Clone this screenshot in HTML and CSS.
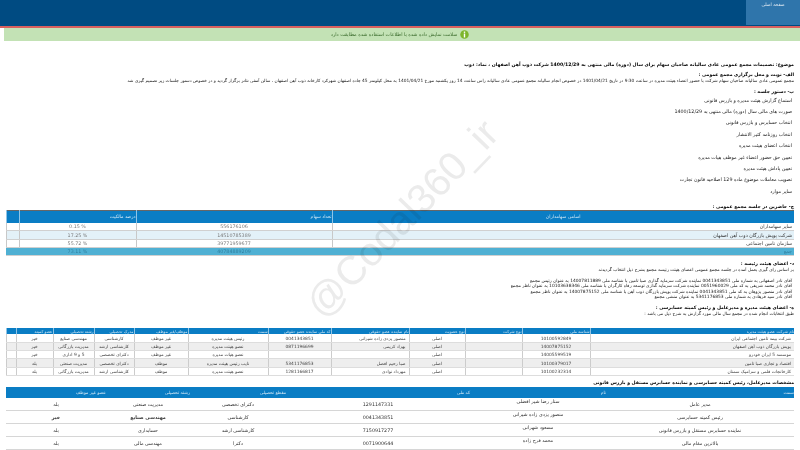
FILE: index.html
```html
<!doctype html>
<html lang="fa">
<head>
<meta charset="utf-8">
<title>تصمیمات مجمع</title>
<link rel="stylesheet" href="styles.css">
</head>
<body>
<div class="topbar"><div class="tab">صفحه اصلی</div></div>
<div class="notice">
	<svg class="info" width="9" height="9" viewBox="0 0 18 18"><circle cx="9" cy="9" r="8.5" fill="#7db52c"/><rect x="7.6" y="3" width="2.8" height="2.8" fill="#fff"/><rect x="7.6" y="7" width="2.8" height="8" fill="#fff"/></svg>
	<span>سلامت نمایش داده شده با اطلاعات استفاده شده مطابقت دارد</span>
</div>
<div class="mark">@Codal360_ir</div>
<div class="content">
	<p class="subject">موضوع: تصمیمات مجمع عمومی عادی سالیانه صاحبان سهام برای سال (دوره) مالی منتهی به 1400/12/29 شرکت ذوب آهن اصفهان ، نماد: ذوب</p>
	<p class="head first">الف- نوبت و محل برگزاری مجمع عمومی :</p>
	<p class="line long">مجمع عمومی عادی سالیانه صاحبان سهام شرکت با حضور اعضاء هیئت مدیره در ساعت 9:30 در تاریخ 1401/04/21 در خصوص انجام سالیانه مجمع عمومی عادی سالیانه راس ساعت 14 روز یکشنبه مورخ 1401/04/21 به محل کیلومتر 45 جاده اصفهان شهرکرد کارخانه ذوب آهن اصفهان ، سالن آمفی تئاتر برگزار گردید و در خصوص دستور جلسات زیر تصمیم گیری شد</p>
	<p class="head agenda">ب- دستور جلسه :</p>
	<ul class="agenda-list">
		<li>استماع گزارش هیئت مدیره و بازرس قانونی</li>
		<li>صورت های مالی سال (دوره) مالی منتهی به 1400/12/29</li>
		<li>انتخاب حسابرس و بازرس قانونی</li>
		<li>انتخاب روزنامه کثیر الانتشار</li>
		<li>انتخاب اعضای هیئت مدیره</li>
		<li>تعیین حق حضور اعضاء غیر موظف هیات مدیره</li>
		<li>تعیین پاداش هیئت مدیره</li>
		<li>تصویب معاملات موضوع ماده 129 اصلاحیه قانون تجارت</li>
		<li>سایر موارد</li>
	</ul>
	<p class="head before-table">ج- حاضرین در جلسه مجمع عمومی :</p>
	<table class="holders">
		<colgroup><col class="c-name"><col class="c-count"><col class="c-pct"><col class="c-gap"></colgroup>
		<tr><th class="name-head">اسامی سهامداران</th><th>تعداد سهام</th><th>درصد مالکیت</th><th></th></tr>
		<tr><td class="start">سایر سهامداران</td><td>556176106</td><td>% 0.15</td><td></td></tr>
		<tr class="alt"><td class="start">شرکت پویش بازرگان ذوب آهن اصفهان</td><td>14510785389</td><td>% 17.25</td><td></td></tr>
		<tr><td class="start">سازمان تامین اجتماعی</td><td>39771959677</td><td>% 55.72</td><td></td></tr>
		<tr class="total"><td class="start">جمع</td><td>40784889209</td><td>% 73.11</td><td></td></tr>
	</table>
	<p class="head after-table">د- اعضای هیئت رئیسه :</p>
	<p class="line">بر اساس رای گیری بعمل آمده در جلسه مجمع عمومی اعضای هیئت رئیسه مجمع بشرح ذیل انتخاب گردیدند</p>
	<div class="board">
		<p>آقای نادر اصفهانی به شماره ملی 0041343851 نماینده شرکت سرمایه گذاری صبا تامین با شناسه ملی 14007811889 به عنوان رئیس مجمع</p>
		<p>آقای نادر محمد شریفی به کد ملی 0051960029 نماینده شرکت سرمایه گذاری توسعه رفاه کارگران با شناسه ملی 10103638346 به عنوان ناظر مجمع</p>
		<p>آقای نادر منصور پژوهان به کد ملی 0041343851 نماینده شرکت پویش بازرگان ذوب آهن با شناسه ملی 14007875152 به عنوان ناظر مجمع</p>
		<p>آقای نادر سید فرهادی به شماره ملی 5341176853 به عنوان منشی مجمع</p>
	</div>
	<p class="head directors">ه- اعضای هیئت مدیره و مدیرعامل و رئیس کمیته حسابرسی :</p>
	<p class="line">طبق انتخابات انجام شده در مجمع سال مالی مورد گزارش به شرح ذیل می باشد :</p>
	<table class="members">
		<colgroup><col class="m1"><col class="m2"><col class="m3"><col class="m4"><col class="m5"><col class="m6"><col class="m7"><col class="m8"><col class="m9"><col class="m10"><col class="m11"><col class="m12"></colgroup>
		<tr><th>نام شرکت عضو هیئت مدیره</th><th>شناسه ملی</th><th>نوع شرکت</th><th>نوع عضویت</th><th>نام نماینده عضو حقوقی</th><th>کد ملی نماینده عضو حقوقی</th><th>سمت</th><th>موظف/غیر موظف</th><th>مدرک تحصیلی</th><th>رشته تحصیلی</th><th>عضو کمیته</th><th></th></tr>
		<tr><td class="start">شرکت بیمه تامین اجتماعی ایران</td><td>10100592849</td><td class="none"></td><td>اصلی</td><td class="start">منصور یزدی زاده شیرانی</td><td>0041343851</td><td>رئیس هیئت مدیره</td><td>غیر موظف</td><td>کارشناسی</td><td>مهندسی صنایع</td><td>خیر</td><td></td></tr>
		<tr class="alt"><td class="start">پویش بازرگان ذوب آهن اصفهان</td><td>14007875152</td><td class="none"></td><td>اصلی</td><td class="start">بهزاد کریمی</td><td>0871196699</td><td>عضو هیئت مدیره</td><td>غیر موظف</td><td>کارشناسی ارشد</td><td>مدیریت بازرگانی</td><td>خیر</td><td></td></tr>
		<tr><td class="start">موسسه 5 ایران خودرو</td><td>14005599519</td><td class="none"></td><td>اصلی</td><td class="start"></td><td></td><td>عضو هیات مدیره</td><td>غیر موظف</td><td>دکترای تخصصی</td><td>5 و 9 اداری</td><td>خیر</td><td></td></tr>
		<tr class="alt"><td class="start">اقتصاد و تجاری صبا تامین</td><td>10100379017</td><td class="none"></td><td>اصلی</td><td class="start">صبا رحیم افضل</td><td>5341176853</td><td>نایب رئیس هیئت مدیره</td><td>موظف</td><td>دکترای تخصصی</td><td>مدیریت صنعتی</td><td>بله</td><td></td></tr>
		<tr><td class="start">کارخانجات قلمی و سرامیک سمنان</td><td>10100232314</td><td class="none"></td><td>اصلی</td><td class="start">مهرداد نوادی</td><td>1281166817</td><td>عضو هیئت مدیره</td><td>موظف</td><td>کارشناسی ارشد</td><td>مدیریت بازرگانی</td><td>بله</td><td></td></tr>
	</table>
	<p class="head before-staff">مشخصات مدیرعامل، رئیس کمیته حسابرسی و نماینده حسابرس مستقل و بازرس قانونی</p>
	<table class="staff">
		<colgroup><col class="s1"><col class="s2"><col class="s3"><col class="s4"><col class="s5"><col class="s6"></colgroup>
		<tr><th>سمت</th><th>نام</th><th>کد ملی</th><th>مقطع تحصیلی</th><th>رشته تحصیلی</th><th>عضو غیر موظف</th></tr>
		<tr><td>مدیر عامل</td><td class="high">ستار رضا شیر افضلی</td><td>1291147331</td><td>دکترای تخصصی</td><td>مدیریت صنعتی</td><td>بله</td></tr>
		<tr><td>رئیس کمیته حسابرسی</td><td class="high">منصور یزدی زاده شیرانی</td><td>0041343851</td><td>کارشناسی</td><td class="bold">مهندسی صنایع</td><td class="bold">خیر</td></tr>
		<tr><td>نماینده حسابرس مستقل و بازرس قانونی</td><td class="high">مسعود شهرانی</td><td>7150917277</td><td>کارشناسی ارشد</td><td>حسابداری</td><td>بله</td></tr>
		<tr><td>بالاترین مقام مالی</td><td class="high">محمد فرح زاده</td><td>0071900644</td><td>دکترا</td><td>مهندسی مالی</td><td>بله</td></tr>
	</table>
</div>
</body>
</html>
```

FILE: styles.css
```css
*{margin: 0;padding: 0;box-sizing: border-box;}
html,body{
	height: 450px;
	overflow: hidden;
}
body{
	font-family: "DejaVu Sans", "Liberation Sans", sans-serif;
	font-size: 5px;
	color: #222;
	background: #fff;
	position: relative;
}
.topbar{
	height: 28px;
	background: #004b82;
	border-bottom: 2px solid #d9605f;
	display: flex;
	justify-content: flex-end;
}
.tab{
	width: 54px;
	height: 25px;
	background: #2f75ab;
	color: #dfe9f2;
	font-size: 4.5px;
	text-align: center;
	padding-top: 2px;
}
.notice{
	margin-left: 4px;
	height: 12.5px;
	background: #c3e2b5;
	color: #3a6b2c;
	display: flex;
	align-items: center;
	justify-content: center;
	gap: 3px;
	font-size: 4.8px;
	padding-right: 4px;
	direction: rtl;
}
.info{
	flex: none;
}
.mark{
	position: absolute;
	left: 272px;
	top: 196px;
	width: 260px;
	text-align: center;
	font-family: "Liberation Sans", sans-serif;
	font-size: 40px;
	color: #ebebeb;
	white-space: nowrap;
	transform: rotate(-46deg);
	z-index: 2;
	mix-blend-mode: multiply;
}
.content{
	direction: rtl;
	padding: 0 6px;
	text-align: right;
	position: relative;
}
.subject{
	margin-top: 20px;
	font-weight: bold;
	font-size: 4.65px;
	line-height: 7px;
	color: #000;
}
.head{
	font-weight: bold;
	font-size: 4.6px;
	line-height: 6px;
	color: #000;
}
.line{
	font-size: 4.4px;
	line-height: 6px;
	white-space: nowrap;
}
.long{
	font-size: 4.35px;
}
.first{margin-top: 4px;}
.agenda{margin-top: 5px;}
.agenda-list{
	list-style: none;
}
.agenda-list li{
	font-size: 4.8px;
	line-height: 11.4px;
	padding-right: 2px;
}
.before-table{margin-top: 7px;}
table{
	width: 788px;
	border-collapse: collapse;
	table-layout: fixed;
}
.holders{
	border-top: 1px solid #666;
	border-bottom: 1px solid #223;
	border-left: 1px solid #223;
}
.c-name{width: 462px;}
.c-count{width: 196px;}
.c-pct{width: 117px;}
.c-gap{width: 13px;}
.holders th{
	height: 12px;
	background: #0a7dc4;
	color: #cfe6f5;
	font-weight: normal;
	font-size: 4.6px;
	border-left: 1px solid #8fc4e6;
}
.name-head{
	text-align: center;
}
.holders td{
	height: 8.25px;
	text-align: center;
	font-size: 4.8px;
	color: #777;
	border-left: 1px solid #c8c8c8;
	border-bottom: 1px solid #d0d0d0;
}
.holders .start{
	text-align: right;
	padding-right: 2px;
	color: #333;
}
.holders .alt td{
	background: #e3f1f8;
}
.holders .total td{
	background: #4fb0d3;
	color: #2f7f9f;
	border-left-color: #4fb0d3;
}
.after-table{margin-top: 5px;}
.board{
	margin-top: 5px;
	padding-right: 2px;
	font-size: 4.4px;
	line-height: 5.3px;
}
.board p{
	white-space: nowrap;
}
.directors{margin-top: 6px;}
.members{
	margin-top: 11px;
}
.m1{width: 204px;}
.m2{width: 68px;}
.m3{width: 57px;}
.m4{width: 56px;}
.m5{width: 78px;}
.m6{width: 63px;}
.m7{width: 80px;}
.m8{width: 54px;}
.m9{width: 40px;}
.m10{width: 41px;}
.m11{width: 37px;}
.m12{width: 10px;}
.members th{
	height: 6px;
	background: #0a7dc4;
	color: #cfe6f5;
	font-weight: normal;
	font-size: 4px;
	line-height: 5px;
	border-left: 1px solid #8fc4e6;
	white-space: nowrap;
	overflow: hidden;
}
.members td{
	height: 8.2px;
	font-size: 4.4px;
	line-height: 5px;
	text-align: center;
	color: #444;
	border-left: 1px solid #ccc;
	border-bottom: 1px solid #ddd;
	white-space: nowrap;
	overflow: hidden;
}
.members .start{
	text-align: right;
	padding-right: 3px;
}
.members .none{
	border-right: 1px solid #ccc;
}
.members td:nth-child(2){
	border-left: none;
}
.members .alt td{
	background: #eeeeee;
}
.before-staff{
	margin-top: 4px;
	font-size: 4.6px;
}
.staff{
	margin-top: 1px;
}
.s1{width: 188px;}
.s2{width: 136px;}
.s3{width: 184px;}
.s4{width: 96px;}
.s5{width: 84px;}
.s6{width: 100px;}
.staff th{
	height: 11px;
	background: #0a7dc4;
	color: #cfe6f5;
	font-weight: normal;
	font-size: 4.4px;
}
.staff td{
	height: 13px;
	text-align: center;
	font-size: 4.8px;
	color: #333;
	border-bottom: 1px solid #d6d6d6;
}
.staff .high{
	vertical-align: top;
	padding-top: 1px;
}
.staff .bold{
	font-weight: bold;
}
```
